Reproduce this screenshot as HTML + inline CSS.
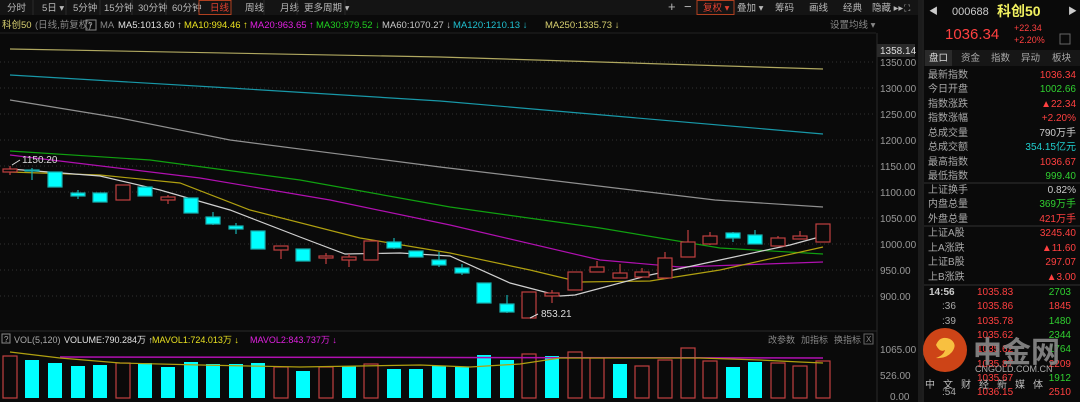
<!DOCTYPE html>
<html><head><meta charset="utf-8"><style>
body{margin:0;background:#0a0a0a;width:1080px;height:402px;overflow:hidden;font-family:"Liberation Sans","Noto Sans CJK SC",sans-serif;}
svg text{font-family:"Liberation Sans","Noto Sans CJK SC",sans-serif;}
</style></head><body>
<svg width="1080" height="402" xmlns="http://www.w3.org/2000/svg" style="position:absolute;left:0;top:0">
<rect width="1080" height="402" fill="#0a0a0a"/>
<!-- toolbar -->
<rect x="0" y="0" width="918" height="15" fill="#141414"/>
<g font-size="9.5" fill="#b8b8b8">
<text x="7" y="11">分时</text><text x="42" y="11">5日 ▾</text><text x="73" y="11">5分钟</text><text x="104" y="11">15分钟</text><text x="138" y="11">30分钟</text><text x="172" y="11">60分钟</text>
<text x="210" y="11" fill="#e04030">日线</text><text x="245" y="11">周线</text><text x="280" y="11">月线</text><text x="304" y="11">更多周期 ▾</text>
</g>
<rect x="199" y="0.5" width="32" height="14" fill="none" stroke="#b04020"/>
<g stroke="#2a2a2a"><line x1="33" y1="0" x2="33" y2="15"/><line x1="66" y1="0" x2="66" y2="15"/><line x1="100" y1="0" x2="100" y2="15"/><line x1="132" y1="0" x2="132" y2="15"/><line x1="166" y1="0" x2="166" y2="15"/><line x1="264" y1="0" x2="264" y2="15"/><line x1="297" y1="0" x2="297" y2="15"/><line x1="345" y1="0" x2="345" y2="15"/></g>
<g font-size="9.5" fill="#b8b8b8">
<text x="668" y="11" font-size="13">+</text><text x="684" y="11" font-size="13">−</text>
<text x="703" y="11" fill="#e04030">复权 ▾</text><text x="737" y="11">叠加 ▾</text><text x="775" y="11">筹码</text><text x="809" y="11">画线</text><text x="843" y="11">经典</text><text x="872" y="11">隐藏 ▸▸</text><text x="904" y="11" font-size="9">⛶</text>
</g>
<rect x="697" y="0.5" width="37" height="14" fill="none" stroke="#b04020"/>
<!-- MA header -->
<g font-size="9.5">
<text x="2" y="28" fill="#d8d070">科创50</text><text x="35" y="28" fill="#888">(日线,前复权)</text>
<rect x="86" y="20" width="10" height="10" fill="none" stroke="#888"/><text x="88" y="28" fill="#aaa" font-size="8">?</text>
<text x="100" y="28" fill="#888">MA</text>
<text x="118" y="28" fill="#e0e0e0">MA5:1013.60 ↑</text>
<text x="184" y="28" fill="#e8e020">MA10:994.46 ↑</text>
<text x="250" y="28" fill="#e020e0">MA20:963.65 ↑</text>
<text x="316" y="28" fill="#20d020">MA30:979.52 ↓</text>
<text x="382" y="28" fill="#c8c8c8">MA60:1070.27 ↓</text>
<text x="453" y="28" fill="#20c0d0">MA120:1210.13 ↓</text>
<text x="545" y="28" fill="#d8d070">MA250:1335.73 ↓</text>
<text x="830" y="28" fill="#888">设置均线 ▾</text>
</g>
<line x1="0" y1="33" x2="876" y2="33" stroke="#222"/>
<!-- grid -->
<g stroke="#333" stroke-dasharray="1,3">
<line x1="0" y1="62" x2="876" y2="62"/><line x1="0" y1="88" x2="876" y2="88"/><line x1="0" y1="114" x2="876" y2="114"/><line x1="0" y1="140" x2="876" y2="140"/><line x1="0" y1="166" x2="876" y2="166"/><line x1="0" y1="192" x2="876" y2="192"/><line x1="0" y1="218" x2="876" y2="218"/><line x1="0" y1="244" x2="876" y2="244"/><line x1="0" y1="270" x2="876" y2="270"/><line x1="0" y1="296" x2="876" y2="296"/>
</g>
<line x1="877" y1="33" x2="877" y2="402" stroke="#2a2a2a"/>
<g font-size="10" fill="#999">
<rect x="877" y="44" width="38" height="13" fill="#2a2a2a"/><text x="880" y="54" fill="#ddd">1358.14</text>
<text x="880" y="66">1350.00</text><text x="880" y="92">1300.00</text><text x="880" y="118">1250.00</text><text x="880" y="144">1200.00</text><text x="880" y="170">1150.00</text><text x="880" y="196">1100.00</text><text x="880" y="222">1050.00</text><text x="880" y="248">1000.00</text><text x="880" y="274">950.00</text><text x="880" y="300">900.00</text>
<text x="880" y="353">1065.00</text><text x="880" y="379">526.00</text><text x="890" y="400">0.00</text>
</g>
<rect x="918" y="0" width="4" height="402" fill="#1c1c1c"/>
<line x1="923" y1="0" x2="923" y2="402" stroke="#333"/>
<!-- MA lines -->
<g fill="none" stroke-width="1.2">
<polyline stroke="#b0a860" points="10,49 440,57 823,69"/>
<polyline stroke="#1898a8" points="10,75 230,88 440,101 823,134"/>
<polyline stroke="#909090" points="10,100 120,118 230,140 440,167 715,200 823,207"/>
<polyline stroke="#10a010" points="10,151 150,160 300,180 450,207 600,228 720,248 823,254"/>
<polyline stroke="#b010b0" points="10,155 200,178 330,200 450,225 600,260 680,267 823,262"/>
<polyline stroke="#b0a010" points="10,172 100,175 180,183 250,210 360,238 450,253 530,270 580,282 650,281 720,270 823,247"/>
<polyline stroke="#d0d0d0" points="10,169 100,176 160,190 230,210 300,237 345,254 400,253 450,256 510,283 560,296 575,295 650,275 720,260 790,245 823,236"/>
</g>
<!-- candles -->
<g stroke-width="1.2">
<g stroke="#c04040" fill="#0a0a0a">
<line x1="10" y1="166" x2="10" y2="175"/><rect x="3" y="169" width="14" height="3"/>
<line x1="123" y1="185" x2="123" y2="200"/><rect x="116" y="185" width="14" height="15"/>
<line x1="168" y1="195" x2="168" y2="204"/><rect x="161" y="197" width="14" height="3"/>
<line x1="281" y1="246" x2="281" y2="259"/><rect x="274" y="246" width="14" height="4"/>
<line x1="326" y1="253" x2="326" y2="264"/><rect x="319" y="256" width="14" height="2"/>
<line x1="349" y1="254" x2="349" y2="267"/><rect x="342" y="257" width="14" height="3"/>
<rect x="364" y="241" width="14" height="19"/>
<rect x="522" y="292" width="14" height="26"/>
<line x1="552" y1="290" x2="552" y2="303"/><rect x="545" y="293" width="14" height="3"/>
<rect x="568" y="272" width="14" height="18"/>
<line x1="597" y1="261" x2="597" y2="272"/><rect x="590" y="267" width="14" height="5"/>
<line x1="620" y1="264" x2="620" y2="278"/><rect x="613" y="273" width="14" height="5"/>
<line x1="642" y1="268" x2="642" y2="277"/><rect x="635" y="272" width="14" height="5"/>
<line x1="665" y1="252" x2="665" y2="279"/><rect x="658" y="258" width="14" height="20"/>
<line x1="688" y1="230" x2="688" y2="257"/><rect x="681" y="242" width="14" height="15"/>
<line x1="710" y1="232" x2="710" y2="245"/><rect x="703" y="236" width="14" height="8"/>
<line x1="778" y1="236" x2="778" y2="246"/><rect x="771" y="238" width="14" height="8"/>
<line x1="800" y1="231" x2="800" y2="239"/><rect x="793" y="236" width="14" height="3"/>
<rect x="816" y="224" width="14" height="18"/>
</g>
<g stroke="#18b0b0" fill="#00ffff">
<line x1="32" y1="168" x2="32" y2="180"/><rect x="25" y="170" width="14" height="1"/>
<rect x="48" y="172" width="14" height="15"/>
<line x1="78" y1="190" x2="78" y2="199"/><rect x="71" y="193" width="14" height="3"/>
<rect x="93" y="193" width="14" height="9"/>
<rect x="138" y="187" width="14" height="9"/>
<rect x="184" y="198" width="14" height="15"/>
<line x1="213" y1="212" x2="213" y2="225"/><rect x="206" y="217" width="14" height="7"/>
<line x1="236" y1="223" x2="236" y2="234"/><rect x="229" y="226" width="14" height="3"/>
<rect x="251" y="231" width="14" height="18"/>
<rect x="296" y="249" width="14" height="12"/>
<line x1="394" y1="238" x2="394" y2="249"/><rect x="387" y="242" width="14" height="6"/>
<rect x="409" y="251" width="14" height="6"/>
<line x1="439" y1="252" x2="439" y2="267"/><rect x="432" y="260" width="14" height="5"/>
<line x1="462" y1="264" x2="462" y2="275"/><rect x="455" y="268" width="14" height="5"/>
<rect x="477" y="283" width="14" height="20"/>
<line x1="507" y1="295" x2="507" y2="313"/><rect x="500" y="304" width="14" height="8"/>
<line x1="733" y1="232" x2="733" y2="242"/><rect x="726" y="233" width="14" height="5"/>
<line x1="755" y1="230" x2="755" y2="244"/><rect x="748" y="235" width="14" height="9"/>
</g>
</g>
<g font-size="10" fill="#ddd"><text x="22" y="163">1150.20</text><text x="541" y="317">853.21</text></g>
<line x1="12" y1="165" x2="20" y2="160" stroke="#ddd"/><line x1="530" y1="318" x2="538" y2="314" stroke="#ddd"/>
<!-- volume panel -->
<line x1="0" y1="331" x2="877" y2="331" stroke="#2a2a2a"/>
<g font-size="9">
<rect x="2" y="334" width="8" height="9" fill="none" stroke="#888"/><text x="4" y="342" fill="#aaa" font-size="8">?</text>
<text x="14" y="343" fill="#aaa">VOL(5,120)</text><text x="64" y="343" fill="#e0e0e0">VOLUME:790.284万 ↑</text>
<text x="152" y="343" fill="#e8e020">MAVOL1:724.013万 ↓</text><text x="250" y="343" fill="#e020e0">MAVOL2:843.737万 ↓</text>
<text x="768" y="343" fill="#888">改参数</text><text x="801" y="343" fill="#888">加指标</text><text x="834" y="343" fill="#888">换指标</text>
<rect x="864" y="334" width="9" height="10" fill="none" stroke="#666"/><text x="866" y="342" fill="#888" font-size="8">X</text>
</g>
<g stroke-width="1.2">
<g fill="none" stroke="#c04040">
<rect x="3" y="356" width="14" height="42"/><rect x="116" y="363" width="14" height="35"/><rect x="274" y="367" width="14" height="31"/><rect x="319" y="367" width="14" height="31"/><rect x="364" y="364" width="14" height="34"/>
<rect x="522" y="354" width="14" height="44"/><rect x="568" y="352" width="14" height="46"/><rect x="590" y="358" width="14" height="40"/><rect x="635" y="366" width="14" height="32"/><rect x="658" y="360" width="14" height="38"/><rect x="681" y="348" width="14" height="50"/><rect x="703" y="361" width="14" height="37"/><rect x="771" y="363" width="14" height="35"/><rect x="793" y="366" width="14" height="32"/><rect x="816" y="361" width="14" height="37"/>
</g>
<g fill="#00ffff">
<rect x="25" y="360" width="14" height="38"/><rect x="48" y="363" width="14" height="35"/><rect x="71" y="366" width="14" height="32"/><rect x="93" y="365" width="14" height="33"/><rect x="138" y="363" width="14" height="35"/><rect x="161" y="367" width="14" height="31"/><rect x="184" y="362" width="14" height="36"/><rect x="206" y="364" width="14" height="34"/><rect x="229" y="364" width="14" height="34"/><rect x="251" y="363" width="14" height="35"/><rect x="296" y="371" width="14" height="27"/><rect x="342" y="366" width="14" height="32"/><rect x="387" y="369" width="14" height="29"/><rect x="409" y="369" width="14" height="29"/><rect x="432" y="366" width="14" height="32"/><rect x="455" y="367" width="14" height="31"/><rect x="477" y="355" width="14" height="43"/><rect x="500" y="360" width="14" height="38"/><rect x="545" y="356" width="14" height="42"/><rect x="613" y="364" width="14" height="34"/><rect x="726" y="367" width="14" height="31"/><rect x="748" y="362" width="14" height="36"/>
</g>
</g>
<polyline fill="none" stroke="#b010b0" stroke-width="1.5" points="60,357 823,358"/>
<polyline fill="none" stroke="#b0a010" stroke-width="1.2" points="10,352 60,358 120,363 200,365 300,367 420,365 470,367 520,364 560,358 620,358 700,358 760,360 800,362 823,363"/>
<!-- right panel -->
<g font-size="11">
<text x="929" y="14" fill="#ccc" font-size="9">◀</text><text x="1068" y="14" fill="#ccc" font-size="9">▶</text>
<text x="952" y="15" fill="#ccc">000688</text><text x="997" y="16" fill="#f0f060" font-size="14" font-weight="bold">科创50</text>
<text x="945" y="39" fill="#ff4040" font-size="15">1036.34</text>
<text x="1014" y="31" fill="#ff4040" font-size="9">+22.34</text><text x="1014" y="43" fill="#ff4040" font-size="9">+2.20%</text>
<rect x="1060" y="34" width="10" height="10" fill="none" stroke="#666"/>
</g>
<rect x="924" y="50" width="156" height="16" fill="#161616"/>
<rect x="925" y="50" width="27" height="16" fill="#2a2a2a"/>
<g font-size="9.5" fill="#aaa"><text x="929" y="61" fill="#ddd">盘口</text><text x="961" y="61">资金</text><text x="991" y="61">指数</text><text x="1021" y="61">异动</text><text x="1052" y="61">板块</text></g>
<g font-size="10">
<g fill="#aaa">
<text x="928" y="78">最新指数</text><text x="928" y="92">今日开盘</text><text x="928" y="107">指数涨跌</text><text x="928" y="121">指数涨幅</text><text x="928" y="136">总成交量</text><text x="928" y="150">总成交额</text><text x="928" y="165">最高指数</text><text x="928" y="179">最低指数</text>
<text x="928" y="193">上证换手</text><text x="928" y="207">内盘总量</text><text x="928" y="222">外盘总量</text>
<text x="928" y="236">上证A股</text><text x="928" y="251">上A涨跌</text><text x="928" y="265">上证B股</text><text x="928" y="280">上B涨跌</text>
</g>
<g text-anchor="end">
<text x="1076" y="78" fill="#ff4040">1036.34</text><text x="1076" y="92" fill="#30d030">1002.66</text><text x="1076" y="107" fill="#ff4040">▲22.34</text><text x="1076" y="121" fill="#ff4040">+2.20%</text><text x="1076" y="136" fill="#ccc">790万手</text><text x="1076" y="150" fill="#20d0d0">354.15亿元</text><text x="1076" y="165" fill="#ff4040">1036.67</text><text x="1076" y="179" fill="#30d030">999.40</text>
<text x="1076" y="193" fill="#ccc">0.82%</text><text x="1076" y="207" fill="#30d030">369万手</text><text x="1076" y="222" fill="#ff4040">421万手</text>
<text x="1076" y="236" fill="#ff4040">3245.40</text><text x="1076" y="251" fill="#ff4040">▲11.60</text><text x="1076" y="265" fill="#ff4040">297.07</text><text x="1076" y="280" fill="#ff4040">▲3.00</text>
</g>
</g>
<g stroke="#333"><line x1="924" y1="183" x2="1080" y2="183"/><line x1="924" y1="226" x2="1080" y2="226"/><line x1="924" y1="285" x2="1080" y2="285"/></g>
<g font-size="10">
<g fill="#aaa"><text x="929" y="295" fill="#ccc" font-weight="bold">14:56</text><text x="942" y="309">:36</text><text x="942" y="324">:39</text><text x="942" y="395">:54</text></g>
<g fill="#ff4040"><text x="977" y="295">1035.83</text><text x="977" y="309">1035.86</text><text x="977" y="324">1035.78</text><text x="977" y="338">1035.62</text><text x="977" y="352">1035.62</text><text x="977" y="367">1035.87</text><text x="977" y="381">1035.67</text><text x="977" y="395">1036.15</text></g>
<g text-anchor="end"><text x="1071" y="295" fill="#30d030">2703</text><text x="1071" y="309" fill="#ff4040">1845</text><text x="1071" y="324" fill="#30d030">1480</text><text x="1071" y="338" fill="#30d030">2344</text><text x="1071" y="352" fill="#30d030">1764</text><text x="1071" y="367" fill="#ff4040">2209</text><text x="1071" y="381" fill="#30d030">1912</text><text x="1071" y="395" fill="#ff4040">2510</text></g>
</g>
<!-- watermark -->
<circle cx="945" cy="350" r="22" fill="#d84818" opacity="0.95"/>
<path d="M936 345 q4 -10 14 -6 q8 5 2 13 q-6 7 -16 6 q8 -3 9 -8 q-5 3 -9 -5z" fill="#f8c040"/>
<text x="973" y="362" fill="#8a8a8a" font-size="29" font-weight="bold" opacity="0.9">中金网</text>
<text x="975" y="372" fill="#aaa" font-size="9">CNGOLD.COM.CN</text>
<text x="925" y="388" fill="#bbb" font-size="10" letter-spacing="8">中文财经新媒体</text>
</svg>
</body></html>
